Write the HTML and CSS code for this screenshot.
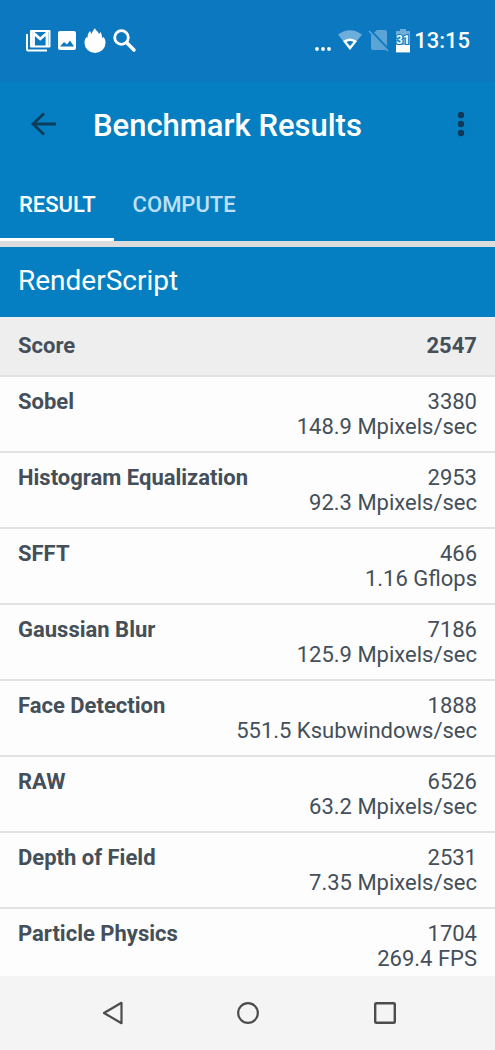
FILE: index.html
```html
<!DOCTYPE html>
<html lang="en">
<head>
    <meta charset="UTF-8">
    <meta name="viewport" content="width=device-width, initial-scale=1.0">
    <title>Benchmark Results</title>
    <link rel="stylesheet" href="styles.css">
</head>
<body>

<div class="status-bar">
    <div class="notifications">
        <svg width="26" height="24" viewBox="0 0 26 24">
            <path d="M2 5v15.500a1 1 0 0 0 1 1H22" fill="none" stroke="#fff" stroke-width="2"/>
            <path d="M6 2h18.500v15.500h-18.500z" fill="none" stroke="#fff" stroke-width="2" stroke-linejoin="round"/>
            <path d="M8.500 17V4l6.700 6L22 4V17" fill="none" stroke="#fff" stroke-width="2.800"/>
        </svg>
        <svg width="20" height="24" viewBox="0 0 20 24">
            <path fill="#fff" fill-rule="evenodd" d="M3 2h14a2 2 0 0 1 2 2v15a2 2 0 0 1-2 2H3a2 2 0 0 1-2-2V4a2 2 0 0 1 2-2zm0 15.500h14L13 11.500 10 15.500 7 13z"/>
        </svg>
        <svg width="24" height="26" viewBox="0 0 24 26">
            <path fill="#fff" d="M12 0c0 2 3 3 4 6l1.500-2c1 2 1.500 3 1.500 6l1.500-1c1.500 2 2 3 2 6a10.500 10 0 0 1-21 0c0-3 .5-4 2-6l1 1c0-3 .5-5 2.500-7l1.500 3c.5-2 2-4 3.500-6z"/>
        </svg>
        <svg width="24" height="24" viewBox="0 0 24 24">
            <circle cx="8.500" cy="8.500" r="6.800" fill="none" stroke="#fff" stroke-width="2.800"/>
            <path d="M13.500 13.500l7.500 7.500" stroke="#fff" stroke-width="3.500" stroke-linecap="round"/>
        </svg>
    </div>
    <div class="system">
        <svg width="18" height="24" viewBox="0 0 18 24" fill="#fff">
            <circle cx="3" cy="20" r="1.900"/>
            <circle cx="9" cy="20" r="1.900"/>
            <circle cx="15" cy="20" r="1.900"/>
        </svg>
        <svg width="26" height="24" viewBox="0 0 26 24">
            <path fill="#6daeda" d="M13 21L1 5.500Q13-3 25 5.500z"/>
            <path fill="#fff" d="M13 21L6 12q7-5 14 0z"/>
            <path fill="#0b78c0" d="M13 17l-3.500-4q3.500-2 7 0z"/>
        </svg>
        <svg width="22" height="24" viewBox="0 0 22 24">
            <path fill="#5ba4d5" d="M9 1h8a2 2 0 0 1 2 2v17l-1 1H5a2 2 0 0 1-2-2V6z"/>
            <path d="M2 1l19 20" stroke="#0b78c0" stroke-width="2.500"/>
            <path d="M1 2l19 20" stroke="#5ba4d5" stroke-width="1.800"/>
        </svg>
        <svg width="16" height="24" viewBox="0 0 16 24">
            <path fill="#6daeda" d="M5 0h6v2h4v22H1V2h4z"/>
            <path fill="#fff" d="M1 16h14v7H1z"/>
            <text x="8" y="15" text-anchor="middle" class="battery-level">31</text>
        </svg>
        <span class="time">13:15</span>
    </div>
</div>

<header class="app-bar">
    <button aria-label="Back">
        <svg width="26" height="26" viewBox="0 0 26 26">
            <path d="M26 12H4M14 1.500L3 12l11 10.500" fill="none" stroke="#0b3d5c" stroke-width="2.800"/>
        </svg>
    </button>
    <h1>Benchmark Results</h1>
    <button aria-label="More options">
        <svg width="8" height="26" viewBox="0 0 8 26" fill="#0e3a58">
            <circle cx="4" cy="3" r="3.200"/>
            <circle cx="4" cy="12" r="3.200"/>
            <circle cx="4" cy="21" r="3.200"/>
        </svg>
    </button>
</header>

<nav class="tabs">
    <a href="#result" class="active">RESULT</a>
    <a href="#compute">COMPUTE</a>
</nav>

<main id="result" class="content">
    <h2>RenderScript</h2>
    <table>
        <tr class="score">
            <th scope="row">Score</th>
            <td>2547</td>
        </tr>
        <tr>
            <th scope="row">Sobel</th>
            <td>3380<br>148.9 Mpixels/sec</td>
        </tr>
        <tr>
            <th scope="row">Histogram Equalization</th>
            <td>2953<br>92.3 Mpixels/sec</td>
        </tr>
        <tr>
            <th scope="row">SFFT</th>
            <td>466<br>1.16 Gflops</td>
        </tr>
        <tr>
            <th scope="row">Gaussian Blur</th>
            <td>7186<br>125.9 Mpixels/sec</td>
        </tr>
        <tr>
            <th scope="row">Face Detection</th>
            <td>1888<br>551.5 Ksubwindows/sec</td>
        </tr>
        <tr>
            <th scope="row">RAW</th>
            <td>6526<br>63.2 Mpixels/sec</td>
        </tr>
        <tr>
            <th scope="row">Depth of Field</th>
            <td>2531<br>7.35 Mpixels/sec</td>
        </tr>
        <tr>
            <th scope="row">Particle Physics</th>
            <td>1704<br>269.4 FPS</td>
        </tr>
    </table>
</main>

<div class="nav-bar">
    <button aria-label="Back">
        <svg width="24" height="24" viewBox="0 0 24 24">
            <path d="M22.500 1.800v20.400L5 12z" fill="none" stroke="#4c4c4c" stroke-width="2.200" stroke-linejoin="round"/>
        </svg>
    </button>
    <button aria-label="Home">
        <svg width="24" height="24" viewBox="0 0 24 24">
            <circle cx="12" cy="12" r="9.800" fill="none" stroke="#4c4c4c" stroke-width="2.200"/>
        </svg>
    </button>
    <button aria-label="Recent apps">
        <svg width="24" height="24" viewBox="0 0 24 24">
            <rect x="2.200" y="2.200" width="19.600" height="19.600" rx="1" fill="none" stroke="#4c4c4c" stroke-width="2.400"/>
        </svg>
    </button>
</div>

</body>
</html>
```

FILE: styles.css
```css
* {
    box-sizing: border-box;
}
body {
    font-family: Roboto, sans-serif;
    margin: 0;
    height: 100vh;
    display: flex;
    flex-direction: column;
    background-color: #fdfdfd;
    color: #444f59;
}
svg {
    display: block;
}
button {
    padding: 0;
    border: none;
    background: none;
    cursor: pointer;
}
.status-bar {
    display: flex;
    justify-content: space-between;
    align-items: center;
    height: 82px;
    padding: 0 25px;
    background-color: #0b78c0;
    color: #ffffff;
}
.notifications, .system {
    display: flex;
    align-items: center;
    gap: 6px;
}
.system {
    gap: 5px;
}
.battery-level {
    font-size: 12px;
    font-weight: 700;
    fill: #ffffff;
    stroke: #0b78c0;
    stroke-width: 2px;
    paint-order: stroke;
}
.time {
    margin-left: -2px;
    font-size: 22px;
    font-weight: 500;
    line-height: 24px;
}
.app-bar {
    display: flex;
    align-items: center;
    height: 86px;
    padding: 0 30px;
    background-color: #067fc2;
    color: #ffffff;
}
h1 {
    flex: 1;
    margin: 0 0 0 37px;
    font-size: 31px;
    font-weight: 500;
}
.tabs {
    display: flex;
    height: 79px;
    background-color: #067fc2;
    border-bottom: 6px solid #dcdcdc;
}
.tabs a {
    padding: 0 18px 0 19px;
    line-height: 74px;
    font-size: 22px;
    font-weight: 500;
    color: #bfe0f4;
    text-decoration: none;
}
.tabs a.active {
    color: #ffffff;
    box-shadow: inset 0 -3px #ffffff;
}
.content {
    flex: 1;
    min-height: 0;
    overflow-y: auto;
    scrollbar-width: none;
}
h2 {
    margin: 0;
    padding: 0 18px 2px;
    background-color: #067fc2;
    color: #ffffff;
    font-size: 28px;
    font-weight: 400;
    line-height: 68px;
}
table {
    width: 100%;
    table-layout: fixed;
    border-collapse: separate;
    border-spacing: 0;
}
th, td {
    padding: 12px 0;
    border-bottom: 2px solid #e2e2e2;
    font-size: 22px;
    line-height: 25px;
    vertical-align: top;
    white-space: nowrap;
}
th {
    width: 46%;
    padding-left: 18px;
    text-align: left;
    font-weight: 700;
}
td {
    padding-right: 18px;
    text-align: right;
}
.score th, .score td {
    padding-top: 16px;
    padding-bottom: 17px;
    background-color: #eeeeee;
    font-weight: 700;
}
.nav-bar {
    display: flex;
    justify-content: center;
    align-items: center;
    gap: 113px;
    height: 74px;
    background-color: #f4f4f4;
}
```
